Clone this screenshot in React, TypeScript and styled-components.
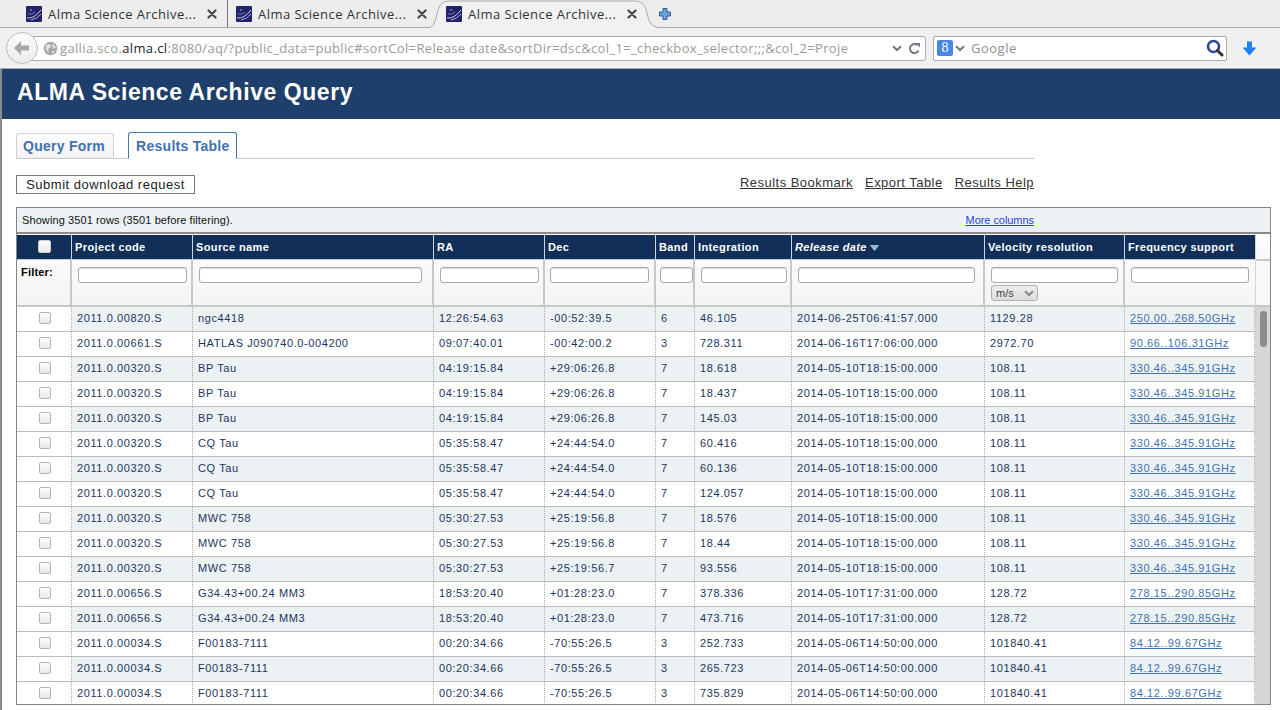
import React from 'react';
import styled, { createGlobalStyle } from 'styled-components';

const GlobalStyle = createGlobalStyle`
   html, body {
      margin: 0;
      padding: 0;
      background: #fff;
      overflow: hidden;
   }
`;

const columns = [55, 121, 241, 111, 111, 39, 97, 193, 140, 130];

type Row = { code: string; source: string; ra: string; dec: string; band: number; integ: string; release: string; vel: string; freq: string };

const row = (code: string, source: string, ra: string, dec: string, band: number, integ: string, release: string, vel: string, freq: string): Row => ({ code, source, ra, dec, band, integ, release, vel, freq });

const hf = '330.46..345.91GHz';
const d1 = '2014-05-10T18:15:00.000';
const d2 = '2014-05-10T17:31:00.000';
const d3 = '2014-05-06T14:50:00.000';

const rows: Row[] = [
   row('2011.0.00820.S', 'ngc4418', '12:26:54.63', '-00:52:39.5', 6, '46.105', '2014-06-25T06:41:57.000', '1129.28', '250.00..268.50GHz'),
   row('2011.0.00661.S', 'HATLAS J090740.0-004200', '09:07:40.01', '-00:42:00.2', 3, '728.311', '2014-06-16T17:06:00.000', '2972.70', '90.66..106.31GHz'),
   row('2011.0.00320.S', 'BP Tau', '04:19:15.84', '+29:06:26.8', 7, '18.618', d1, '108.11', hf),
   row('2011.0.00320.S', 'BP Tau', '04:19:15.84', '+29:06:26.8', 7, '18.437', d1, '108.11', hf),
   row('2011.0.00320.S', 'BP Tau', '04:19:15.84', '+29:06:26.8', 7, '145.03', d1, '108.11', hf),
   row('2011.0.00320.S', 'CQ Tau', '05:35:58.47', '+24:44:54.0', 7, '60.416', d1, '108.11', hf),
   row('2011.0.00320.S', 'CQ Tau', '05:35:58.47', '+24:44:54.0', 7, '60.136', d1, '108.11', hf),
   row('2011.0.00320.S', 'CQ Tau', '05:35:58.47', '+24:44:54.0', 7, '124.057', d1, '108.11', hf),
   row('2011.0.00320.S', 'MWC 758', '05:30:27.53', '+25:19:56.8', 7, '18.576', d1, '108.11', hf),
   row('2011.0.00320.S', 'MWC 758', '05:30:27.53', '+25:19:56.8', 7, '18.44', d1, '108.11', hf),
   row('2011.0.00320.S', 'MWC 758', '05:30:27.53', '+25:19:56.7', 7, '93.556', d1, '108.11', hf),
   row('2011.0.00656.S', 'G34.43+00.24 MM3', '18:53:20.40', '+01:28:23.0', 7, '378.336', d2, '128.72', '278.15..290.85GHz'),
   row('2011.0.00656.S', 'G34.43+00.24 MM3', '18:53:20.40', '+01:28:23.0', 7, '473.716', d2, '128.72', '278.15..290.85GHz'),
   row('2011.0.00034.S', 'F00183-7111', '00:20:34.66', '-70:55:26.5', 3, '252.733', d3, '101840.41', '84.12..99.67GHz'),
   row('2011.0.00034.S', 'F00183-7111', '00:20:34.66', '-70:55:26.5', 3, '265.723', d3, '101840.41', '84.12..99.67GHz'),
   row('2011.0.00034.S', 'F00183-7111', '00:20:34.66', '-70:55:26.5', 3, '735.829', d3, '101840.41', '84.12..99.67GHz'),
];

const headers = [
   { label: 'Project code', filter: 109, inset: 6 },
   { label: 'Source name', filter: 223, inset: 6 },
   { label: 'RA', filter: 99, inset: 6 },
   { label: 'Dec', filter: 99, inset: 5 },
   { label: 'Band', filter: 33, inset: 4 },
   { label: 'Integration', filter: 86, inset: 6 },
   { label: 'Release date', filter: 177, inset: 6 },
   { label: 'Velocity resolution', filter: 127, inset: 6 },
   { label: 'Frequency support', filter: 118, inset: 6 },
];

const Favicon = () => (
   <TabIcon viewBox="0 0 16 16">
      <rect width="16" height="16" rx="1" fill="#23236b" />
      <path d="M1 12 Q8 13 15 4" stroke="#c8cce8" strokeWidth="1" fill="none" />
      <path d="M5 14 Q11 13 15 8" stroke="#aab0dc" strokeWidth="1" fill="none" />
      <path d="M2 8 Q6 9 9 6" stroke="#8a90c8" strokeWidth="0.8" fill="none" />
      <circle cx="5" cy="4" r="0.7" fill="#e8e8ff" />
   </TabIcon>
);

const CloseIcon = () => (
   <CloseSvg viewBox="0 0 10 10">
      <path d="M1.5 1.5 L8.5 8.5 M8.5 1.5 L1.5 8.5" stroke="#4a4a4a" strokeWidth="2.2" strokeLinecap="round" />
   </CloseSvg>
);

const Chevron = ({ color = '#777' }: { color?: string }) => (
   <svg width="10" height="7" viewBox="0 0 10 7">
      <path d="M1 1.2 L5 5 L9 1.2" stroke={color} strokeWidth="2" fill="none" />
   </svg>
);

const App: React.FC = (): JSX.Element => (
   <Screen>
      <GlobalStyle />
      <TabStrip>
         <Tab>
            <Favicon />
            <TabTitle>Alma Science Archive...</TabTitle>
            <CloseIcon />
         </Tab>
         <Tab $divider>
            <Favicon />
            <TabTitle>Alma Science Archive...</TabTitle>
            <CloseIcon />
         </Tab>
         <ActiveTab>
            <TabShape viewBox="0 0 227 28">
               <path d="M0 27 C4 26 5 22 7 14 C9 5 12 1 20 1 H205 C212 1 215 5 217 13 C219 22 221 26 227 27 V28 H0 Z" fill="#f1f1f1" />
               <path d="M0 27 C4 26 5 22 7 14 C9 5 12 1 20 1 H205 C212 1 215 5 217 13 C219 22 221 26 227 27" fill="none" stroke="#a9a9a9" />
            </TabShape>
            <Favicon />
            <TabTitle>Alma Science Archive...</TabTitle>
            <CloseIcon />
         </ActiveTab>
         <svg width="14" height="14" viewBox="0 0 14 14">
            <path d="M5 1.5 h4 v3.5 h3.5 v4 h-3.5 v3.5 h-4 v-3.5 h-3.5 v-4 h3.5 z" fill="#6f9fd8" stroke="#2d5f9e" strokeWidth="1" />
         </svg>
      </TabStrip>
      <NavBar>
         <BackButton>
            <svg width="18" height="16" viewBox="0 0 18 16">
               <path d="M8 1 L1 8 L8 15 V10.5 H16 V5.5 H8 Z" fill="#a9a9a9" />
            </svg>
         </BackButton>
         <UrlBar>
            <GlobeIcon viewBox="0 0 15 15">
               <circle cx="7.5" cy="7.5" r="6.8" fill="#a8a8a8" />
               <path d="M3 4 L7 3 L8 6 L5 8 L6 12 L3 9 Z M10 3 L13 6 L11 8 L9 5 Z M9 10 L12 10 L9 13 Z" fill="#e2e2e2" />
            </GlobeIcon>
            <UrlText>
               gallia.sco.<strong>alma.cl</strong>:8080/aq/?public_data=public#sortCol=Release date&amp;sortDir=dsc&amp;col_1=_checkbox_selector;;;&amp;col_2=Proje
            </UrlText>
            <UrlActions>
               <Chevron />
               <svg width="13" height="13" viewBox="0 0 13 13">
                  <path d="M10.5 8.5 A4.5 4.5 0 1 1 9.5 3.2" stroke="#6f7b88" strokeWidth="2" fill="none" />
                  <path d="M7.5 1 H12 V5.5 Z" fill="#6f7b88" />
               </svg>
            </UrlActions>
         </UrlBar>
         <SearchBar>
            <GoogleBadge>8</GoogleBadge>
            <Chevron />
            <SearchText>Google</SearchText>
            <svg width="18" height="18" viewBox="0 0 18 18">
               <circle cx="7.5" cy="7.5" r="5.5" fill="#fff" stroke="#2e4a8e" strokeWidth="2.6" />
               <path d="M11.5 11.5 L16 16" stroke="#333" strokeWidth="3" strokeLinecap="round" />
            </svg>
         </SearchBar>
         <DownloadSlot>
            <svg width="15" height="15" viewBox="0 0 15 15">
               <path d="M5 0.5 H10 V6.5 H14.5 L7.5 14.5 L0.5 6.5 H5 Z" fill="#1a82ea" />
            </svg>
         </DownloadSlot>
      </NavBar>
      <Page>
         <TitleBar>ALMA Science Archive Query</TitleBar>
         <Content>
            <PageTabs>
               <PageTab>Query Form</PageTab>
               <PageTab $active>Results Table</PageTab>
            </PageTabs>
            <ActionRow>
               <SubmitButton type="button">Submit download request</SubmitButton>
               <ActionLinks>
                  <ActionLink href="#">Results Bookmark</ActionLink>
                  <ActionLink href="#">Export Table</ActionLink>
                  <ActionLink href="#">Results Help</ActionLink>
               </ActionLinks>
            </ActionRow>
            <TablePanel>
               <InfoBar>
                  <span>Showing 3501 rows (3501 before filtering).</span>
                  <MoreColumns href="#">More columns</MoreColumns>
               </InfoBar>
               <TableArea>
                  <HeadWrap>
                     <DataTable>
                        <ColGroup />
                        <thead>
                           <tr>
                              <HeadCell $center><Check $head type="checkbox" /></HeadCell>
                              {headers.map(h => (
                                 <HeadCell key={h.label} $sorted={h.label === 'Release date'}>
                                    {h.label}
                                    {h.label === 'Release date' && (
                                       <SortArrow width="9" height="6" viewBox="0 0 9 6">
                                          <path d="M0.5 0.5 H8.5 L4.5 5.5 Z" fill="#8fb4e0" stroke="#dfe9f5" strokeWidth="0.6" />
                                       </SortArrow>
                                    )}
                                 </HeadCell>
                              ))}
                           </tr>
                           <tr>
                              <FilterCell><FilterLabel>Filter:</FilterLabel></FilterCell>
                              {headers.map(h => (
                                 <FilterCell key={h.label}>
                                    <FilterInput type="text" $w={h.filter} $inset={h.inset} />
                                    {h.label === 'Velocity resolution' && (
                                       <UnitSelect>m/s<Chevron color="#888" /></UnitSelect>
                                    )}
                                 </FilterCell>
                              ))}
                           </tr>
                        </thead>
                     </DataTable>
                     <HeadFiller />
                  </HeadWrap>
                  <BodyWrap>
                     <BodyScroll>
                        <DataTable>
                           <ColGroup />
                           <tbody>
                              {rows.map((r, i) => (
                                 <BodyRow key={i} $odd={i % 2 === 0}>
                                    <CheckCell><Check type="checkbox" /></CheckCell>
                                    <BodyCell>{r.code}</BodyCell>
                                    <BodyCell>{r.source}</BodyCell>
                                    <BodyCell>{r.ra}</BodyCell>
                                    <BodyCell>{r.dec}</BodyCell>
                                    <BodyCell>{r.band}</BodyCell>
                                    <BodyCell>{r.integ}</BodyCell>
                                    <BodyCell>{r.release}</BodyCell>
                                    <BodyCell>{r.vel}</BodyCell>
                                    <BodyCell><FreqLink href="#">{r.freq}</FreqLink></BodyCell>
                                 </BodyRow>
                              ))}
                           </tbody>
                        </DataTable>
                     </BodyScroll>
                     <ScrollTrack>
                        <ScrollThumb />
                     </ScrollTrack>
                  </BodyWrap>
               </TableArea>
            </TablePanel>
         </Content>
      </Page>
   </Screen>
);

const ColGroup = () => (
   <colgroup>
      {columns.map((w, i) => <col key={i} style={{ width: w }} />)}
   </colgroup>
);

const Screen = styled.div`
   width: 1280px;
   height: 710px;
   overflow: hidden;
   display: flex;
   flex-direction: column;
   font-family: "Liberation Sans", Arial, sans-serif;
`;

const TabStrip = styled.div`
   height: 27px;
   background: #ededed;
   border-bottom: 1px solid #a9a9a9;
   display: flex;
   align-items: flex-start;
   padding-left: 12px;

   > svg:last-child {
      margin: 7px 0 0 1px;
   }
`;

const Tab = styled.div<{ $divider?: boolean }>`
   width: ${p => (p.$divider ? '203px' : '216px')};
   height: 27px;
   box-sizing: border-box;
   padding: 6px 0 0 ${p => (p.$divider ? '8px' : '14px')};
   display: flex;
   align-items: flex-start;
   border-right: ${p => (p.$divider ? 'none' : '1px solid #777')};
`;

const ActiveTab = styled.div`
   width: 227px;
   height: 28px;
   box-sizing: border-box;
   margin-left: -1px;
   padding: 6px 0 0 16px;
   display: flex;
   align-items: flex-start;
   position: relative;
   isolation: isolate;
`;

const TabShape = styled.svg`
   position: absolute;
   left: 0;
   top: 0;
   width: 227px;
   height: 28px;
   z-index: -1;
`;

const TabIcon = styled.svg`
   width: 16px;
   height: 16px;
   flex: none;
`;

const TabTitle = styled.span`
   margin-left: 6px;
   width: 159px;
   flex: none;
   font: 13px/16px "Open Sans", sans-serif;
   letter-spacing: 0.45px;
   color: #2e3436;
   white-space: nowrap;
`;

const CloseSvg = styled.svg`
   width: 10px;
   height: 10px;
   margin-top: 3px;
   flex: none;
`;

const NavBar = styled.div`
   height: 41px;
   box-sizing: border-box;
   background: #f0f0f0;
   border-bottom: 1px solid #a9a9a9;
   display: flex;
   align-items: center;
   padding: 0 0 0 6px;
   position: relative;
`;

const BackButton = styled.div`
   width: 30px;
   height: 30px;
   flex: none;
   border-radius: 50%;
   background: linear-gradient(#fbfbfb, #ececec);
   border: 1px solid #bdbdbd;
   display: flex;
   align-items: center;
   justify-content: center;
   position: relative;
   z-index: 1;
`;

const UrlBar = styled.div`
   width: 902px;
   height: 25px;
   box-sizing: border-box;
   margin-left: -14px;
   padding: 0 4px 0 18px;
   background: #fff;
   border: 1px solid #ababab;
   border-radius: 0 3px 3px 0;
   display: flex;
   align-items: center;
`;

const GlobeIcon = styled.svg`
   width: 15px;
   height: 15px;
   flex: none;
`;

const UrlText = styled.div`
   margin-left: 2px;
   white-space: nowrap;
   font: 13px/22px "Open Sans", sans-serif;
   letter-spacing: 0.35px;
   color: #9a9a9a;

   strong {
      font-weight: 400;
      color: #222;
   }
`;

const UrlActions = styled.div`
   display: flex;
   align-items: center;
   gap: 6px;
   margin-left: auto;
`;

const SearchBar = styled.div`
   width: 294px;
   height: 25px;
   box-sizing: border-box;
   margin-left: 7px;
   padding: 0 2px 0 3px;
   background: #fff;
   border: 1px solid #ababab;
   border-radius: 2px;
   display: flex;
   align-items: center;
`;

const GoogleBadge = styled.div`
   width: 16px;
   height: 16px;
   margin-right: 2px;
   border-radius: 2px;
   background: #4a86e8;
   color: #fff;
   font: 14px/16px "Liberation Serif", serif;
   text-align: center;
`;

const SearchText = styled.span`
   margin-left: 6px;
   flex: 1;
   font: 13px "Open Sans", sans-serif;
   letter-spacing: 0.5px;
   color: #8f8f8f;
`;

const DownloadSlot = styled.div`
   margin-left: 15px;
   display: flex;
`;

const Page = styled.div`
   flex: 1;
   min-height: 0;
   border-left: 2px solid #8c8c8c;
   display: flex;
   flex-direction: column;
`;

const TitleBar = styled.div`
   height: 50px;
   flex: none;
   background: #1e3f6c;
   color: #fff;
   font-size: 23px;
   font-weight: 700;
   line-height: 47px;
   letter-spacing: 0.55px;
   padding-left: 15px;
`;

const Content = styled.div`
   flex: 1;
   min-height: 0;
   padding: 13px 9px 0 14px;
   display: flex;
   flex-direction: column;
`;

const PageTabs = styled.div`
   width: 1018px;
   height: 27px;
   box-sizing: border-box;
   border-bottom: 1px solid #c4c8cc;
   display: flex;
   align-items: flex-end;
   gap: 14px;
`;

const PageTab = styled.div<{ $active?: boolean }>`
   box-sizing: border-box;
   height: ${p => (p.$active ? '27px' : '26px')};
   margin-bottom: -1px;
   padding: ${p => (p.$active ? '0 6px 0 7px' : '0 8px 0 6px')};
   border: 1px solid ${p => (p.$active ? '#3f79b5' : '#d0d4d8')};
   border-bottom: 1px solid ${p => (p.$active ? '#fff' : '#c4c8cc')};
   border-radius: 3px 3px 0 0;
   background: ${p => (p.$active ? '#fff' : 'linear-gradient(#fcfcfc, #f3f3f3)')};
   color: #3f72ae;
   font-size: 14px;
   font-weight: 700;
   letter-spacing: 0.27px;
   line-height: ${p => (p.$active ? '26px' : '25px')};
`;

const ActionRow = styled.div`
   width: 1018px;
   margin-top: 16px;
   display: flex;
   justify-content: space-between;
   align-items: flex-start;
`;

const SubmitButton = styled.button`
   width: 179px;
   height: 19px;
   padding: 0;
   background: #fff;
   border: 1px solid #777;
   border-radius: 0;
   font: 13px/17px "Liberation Sans", sans-serif;
   letter-spacing: 0.52px;
   color: #222;
`;

const ActionLinks = styled.div`
   display: flex;
   gap: 12px;
`;

const ActionLink = styled.a`
   font-size: 13px;
   line-height: 15px;
   letter-spacing: 0.47px;
   color: #333;
   text-decoration: underline;
`;

const TablePanel = styled.div`
   margin-top: 13px;
   height: 498px;
   box-sizing: border-box;
   border: 1px solid #858585;
   display: flex;
   flex-direction: column;
   overflow: hidden;
`;

const InfoBar = styled.div`
   height: 26px;
   flex: none;
   box-sizing: border-box;
   border-bottom: 2px solid #8a8a8a;
   background: #ecf1f4;
   padding: 0 236px 0 5px;
   display: flex;
   justify-content: space-between;
   align-items: center;
   font-size: 11px;
   letter-spacing: 0.1px;
   color: #111;
`;

const MoreColumns = styled.a`
   font-size: 11px;
   letter-spacing: -0.05px;
   color: #2a3fe0;
   text-decoration: underline;
`;

const TableArea = styled.div`
   flex: 1;
   min-height: 0;
   display: flex;
   flex-direction: column;
`;

const HeadWrap = styled.div`
   display: flex;
   flex: none;
`;

const HeadFiller = styled.div`
   flex: 1;
   background: linear-gradient(#fff 0, #f8f8f8 25px, #c8c8c8 25px, #c8c8c8 27px, #f8f8f8 27px);
   border-bottom: 2px solid #c8c8c8;
   box-sizing: border-box;
   border-left: 1px solid #d4d4d4;
`;

const DataTable = styled.table`
   table-layout: fixed;
   width: 1238px;
   flex: none;
   border-collapse: separate;
   border-spacing: 0;
`;

const HeadCell = styled.th<{ $center?: boolean; $sorted?: boolean }>`
   height: 26px;
   padding: 0 0 1px ${p => (p.$center ? '0' : '3px')};
   box-sizing: border-box;
   background: #112f58;
   color: #fff;
   border-right: 1px solid #d0d4d8;
   border-top: 1px solid #fff;
   border-bottom: 1px solid #c8c8c8;
   text-align: ${p => (p.$center ? 'center' : 'left')};
   font-size: 11px;
   font-weight: 700;
   letter-spacing: 0.38px;
   white-space: nowrap;
   font-style: ${p => (p.$sorted ? 'italic' : 'normal')};

   &:last-child {
      border-right: none;
   }
`;

const SortArrow = styled.svg`
   margin-left: 3px;
`;

const FilterCell = styled.th`
   height: 47px;
   box-sizing: border-box;
   padding: 7px 0 0;
   vertical-align: top;
   text-align: left;
   background: linear-gradient(#fafafa, #f4f4f4);
   border-right: 2px solid #c8c8c8;
   border-bottom: 2px solid #c8c8c8;

   &:first-child {
      padding: 2px 0 0 4px;
   }

   &:last-child {
      border-right: none;
   }
`;

const FilterLabel = styled.span`
   font-size: 11px;
   font-weight: 700;
   letter-spacing: 0.2px;
   color: #000;
`;

const FilterInput = styled.input<{ $w: number; $inset: number }>`
   display: block;
   width: ${p => p.$w}px;
   height: 16px;
   margin-left: ${p => p.$inset}px;
   box-sizing: border-box;
   padding: 0 3px;
   background: #fff;
   border: 1px solid #aaa;
   border-radius: 3px;
   box-shadow: inset 0 1px 1px #ddd;
   outline: none;
`;

const UnitSelect = styled.div`
   width: 47px;
   height: 16px;
   margin: 2px 0 0 6px;
   box-sizing: border-box;
   padding: 0 3px 0 4px;
   background: linear-gradient(#ececec, #dcdcdc);
   border: 1px solid #b0b0b0;
   border-radius: 3px;
   display: flex;
   justify-content: space-between;
   align-items: center;
   font-size: 11px;
   font-weight: 400;
   color: #444;
`;

const BodyWrap = styled.div`
   flex: 1;
   min-height: 0;
   display: flex;
   overflow: hidden;
`;

const BodyScroll = styled.div`
   width: 1238px;
   flex: none;
   overflow: hidden;
`;

const BodyRow = styled.tr<{ $odd: boolean }>`
   background: ${p => (p.$odd ? '#ecf1f4' : '#fff')};
`;

const BodyCell = styled.td`
   height: 25px;
   box-sizing: border-box;
   padding: 0 0 3px 5px;
   border-right: 1px dotted #aaa;
   border-bottom: 1px solid #bbb;
   font-size: 11px;
   letter-spacing: 0.6px;
   color: #1b3560;
   white-space: nowrap;
   overflow: hidden;
`;

const CheckCell = styled(BodyCell)`
   background: #fff;
   padding: 0 0 4px 2px;
   text-align: center;
`;

const Check = styled.input<{ $head?: boolean }>`
   appearance: none;
   display: inline-block;
   vertical-align: middle;
   margin: 0;
   width: ${p => (p.$head ? '13px' : '12px')};
   height: ${p => (p.$head ? '13px' : '12px')};
   box-sizing: border-box;
   border: 1px solid ${p => (p.$head ? '#d0d0d0' : '#b4b4b4')};
   border-radius: 2px;
   background: linear-gradient(#fdfdfd, #e8e8e8);
`;

const FreqLink = styled.a`
   color: #3f72ae;
   text-decoration: underline;
`;

const ScrollTrack = styled.div`
   flex: 1;
   background: #d6d6d6;
   padding: 4px 0 0 5px;
`;

const ScrollThumb = styled.div`
   width: 7px;
   height: 36px;
   border-radius: 4px;
   background: #8c8c8c;
`;

export default App;
